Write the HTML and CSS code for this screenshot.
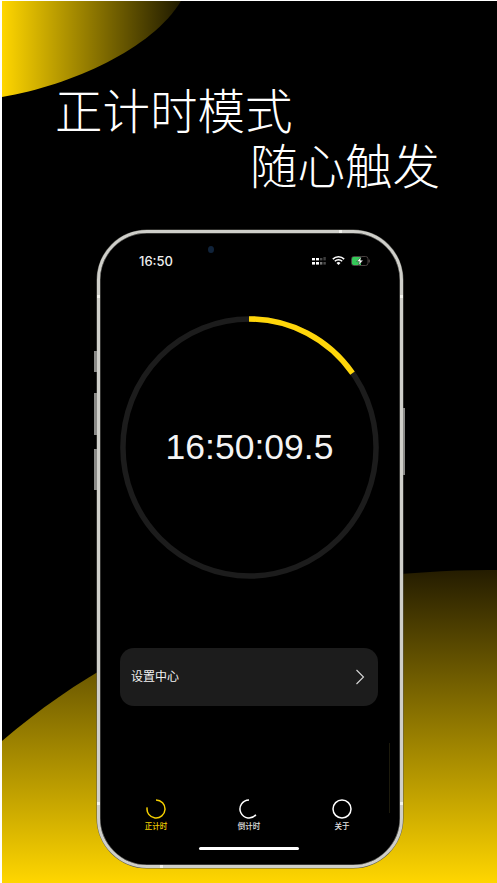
FILE: index.html
```html
<!DOCTYPE html>
<html lang="zh">
<head>
<meta charset="utf-8">
<title>正计时模式</title>
<link rel="stylesheet" href="styles.css">
</head>
<body>
<main class="poster">
  <svg class="backdrop" viewBox="0 0 495 882" aria-hidden="true">
    <defs>
      <linearGradient id="topFade" x1="0" y1="0" x2="1" y2="0">
        <stop offset="0" stop-color="#ffd600"/>
        <stop offset="1" stop-color="#ffd600" stop-opacity="0.12"/>
      </linearGradient>
      <linearGradient id="bottomFade" x1="0" y1="0" x2="0" y2="1">
        <stop offset="0" stop-color="#241c00"/>
        <stop offset="1" stop-color="#ffd600"/>
      </linearGradient>
    </defs>
    <path d="M0 0H179C150 48 70 84 0 96Z" fill="url(#topFade)"/>
    <path d="M0 740C128 629 298 567 495 569V882H0Z" fill="url(#bottomFade)"/>
  </svg>

  <h1 class="headline">
    <span class="line-one">正计时模式</span>
    <span class="line-two">随心触发</span>
  </h1>

  <div class="phone">
    <i class="side-btn mute"></i>
    <i class="side-btn vol-up"></i>
    <i class="side-btn vol-down"></i>
    <i class="side-btn power"></i>
    <i class="band band-top"></i>
    <i class="band band-left"></i>
    <i class="band band-right"></i>
    <i class="band band-low-left"></i>
    <i class="band band-low-right"></i>
    <i class="band band-bottom"></i>
    <i class="camera"></i>
    <i class="edge-line"></i>

    <header class="status">
      <span class="clock">16:50</span>
      <div class="status-icons">
        <svg class="signal" viewBox="0 0 14 8" aria-hidden="true">
          <rect x="0" y="1" width="3" height="2.4" fill="#fff"/>
          <rect x="4" y="1" width="3" height="2.4" fill="#fff"/>
          <rect x="0" y="5" width="3" height="2.6" fill="#fff"/>
          <rect x="4" y="5" width="3" height="2.6" fill="#fff"/>
          <rect x="8" y="1" width="2.4" height="2.4" fill="#4a4a4a"/>
          <rect x="8" y="5" width="2.4" height="2.6" fill="#777"/>
          <rect x="11.4" y="0" width="2.4" height="3.4" fill="#3c3c3c"/>
          <rect x="11.4" y="5" width="2.4" height="2.6" fill="#4a4a4a"/>
        </svg>
        <svg class="wifi" viewBox="0 0 13 9" aria-hidden="true">
          <path d="M.8 3.1a8.2 8.2 0 0 1 11.4 0M2.8 5.2a5.3 5.3 0 0 1 7.4 0" fill="none" stroke="#fff" stroke-width="1.5"/>
          <path d="M4.5 6.9a2.8 2.8 0 0 1 4 0L6.5 9Z" fill="#fff"/>
        </svg>
        <svg class="battery" viewBox="0 0 19 10" aria-hidden="true">
          <rect x=".5" y=".5" width="16.5" height="9" rx="2.4" fill="none" stroke="#5c5250" stroke-width=".8"/>
          <path d="M2.4 1H10V9H2.4A1.4 1.4 0 0 1 1 7.6V2.4A1.4 1.4 0 0 1 2.4 1Z" fill="#35c759"/>
          <rect x="17.6" y="3.5" width="1.1" height="3" rx=".5" fill="#5c5250"/>
          <path d="M10.4 .4 5.8 5.6H8.4L7.4 9.6 12.2 4.2H9.4Z" fill="#fff" stroke="#000" stroke-width=".4"/>
        </svg>
      </div>
    </header>

    <section class="dial">
      <svg class="dial-ring" viewBox="0 0 264 264" preserveAspectRatio="none" aria-hidden="true">
        <circle cx="132" cy="132" r="129" fill="none" stroke="#1c1c1c" stroke-width="5.6"/>
        <path d="M131.5 3A129 129 0 0 1 237 57.4" fill="none" stroke="#ffd60a" stroke-width="5.6"/>
      </svg>
      <span class="time">16:50:09.5</span>
    </section>

    <a class="settings">
      <span class="settings-label">设置中心</span>
      <svg class="chevron" viewBox="0 0 10 16" aria-hidden="true">
        <path d="M1.5 1 8.5 8 1.5 15" fill="none" stroke="#d8d8d8" stroke-width="1.1"/>
      </svg>
    </a>

    <nav class="tabs">
      <div class="tab tab-active">
        <svg viewBox="0 0 20 20" aria-hidden="true"><path d="M10 1A9 9 0 1 1 1.14 8.44"/></svg>
        <span>正计时</span>
      </div>
      <div class="tab">
        <svg viewBox="0 0 20 20" aria-hidden="true"><path d="M10 1A9 9 0 1 0 16.9 15.8"/></svg>
        <span>倒计时</span>
      </div>
      <div class="tab">
        <svg viewBox="0 0 20 20" aria-hidden="true"><circle cx="10" cy="10" r="9"/></svg>
        <span>关于</span>
      </div>
    </nav>

    <i class="home-bar"></i>
  </div>
</main>
</body>
</html>
```

FILE: styles.css
```css
* { box-sizing: border-box; }

html, body {
  margin: 0;
  height: 100%;
  background: #fff;
}

body {
  padding: 1px 0 0 2px;
  overflow: hidden;
  font-family: "Noto Sans CJK SC", "Noto Sans", sans-serif;
}

.poster {
  position: relative;
  width: 495px;
  height: 882px;
  background: #000;
  overflow: hidden;
  display: flex;
  flex-direction: column;
  padding-top: 80px;
}

.backdrop {
  position: absolute;
  inset: 0;
  width: 495px;
  height: 882px;
}

.headline {
  position: relative;
  margin: 0;
  display: flex;
  flex-direction: column;
  color: #fff;
  font-size: 47.5px;
  font-weight: 300;
  line-height: 55px;
}

.line-one { margin-left: 53px; }
.line-two { margin-left: 248px; }

.phone {
  position: relative;
  margin: 39px 0 0 95px;
  width: 306px;
  height: 638px;
  background: #000;
  border: 3px solid #cfcfca;
  border-radius: 50px;
  box-shadow: 0 0 0 .5px #5a5a55, inset 0 0 0 .5px #6a6a66;
  display: flex;
  flex-direction: column;
  color: #fff;
}

.side-btn {
  position: absolute;
  width: 3px;
  background: #8a8a88;
}
.mute { left: -6px; top: 118px; height: 21px; }
.vol-up { left: -6px; top: 160px; height: 42px; }
.vol-down { left: -6px; top: 216px; height: 41px; }
.power { right: -5px; left: auto; top: 175px; height: 67px; width: 2px; }

.band {
  position: absolute;
  width: 3px;
  height: 3px;
  background: #f1f1ec;
}
.band-top { left: 239px; top: -3px; }
.band-left { left: -3px; top: 62px; }
.band-right { right: -3px; top: 62px; }
.band-low-left { left: -3px; top: 569px; }
.band-low-right { right: -3px; top: 569px; }
.band-bottom { left: 60px; bottom: -3px; }

.camera {
  position: absolute;
  left: 108px;
  top: 13px;
  width: 6px;
  height: 7px;
  border-radius: 50%;
  background: #10233a;
}

.edge-line {
  position: absolute;
  right: 10px;
  top: 510px;
  width: 1px;
  height: 70px;
  background: #1c1a0c;
}

.status {
  margin-top: 20px;
  height: 16px;
  padding: 0 30px 0 39px;
  display: flex;
  align-items: center;
  justify-content: space-between;
}

.clock {
  font-family: Inter, "Liberation Sans", sans-serif;
  font-size: 13px;
  font-weight: 500;
  color: #eee;
}

.status-icons {
  display: flex;
  align-items: center;
  gap: 6px;
}
.signal { width: 14px; height: 8px; }
.wifi { width: 13px; height: 9px; margin-top: -2px; }
.battery { width: 19px; height: 10px; }

.dial {
  position: relative;
  margin: 47px 0 0 20px;
  width: 259px;
  height: 263px;
  display: flex;
  align-items: center;
  justify-content: center;
}

.dial-ring {
  position: absolute;
  inset: 0;
  width: 100%;
  height: 100%;
}

.time {
  position: relative;
  font-family: "Liberation Sans", Arial, sans-serif;
  font-size: 35.5px;
  font-weight: 400;
  line-height: 1;
  color: #f4f4f4;
}

.settings {
  margin: 69px 22px 0 20px;
  height: 58px;
  padding: 0 13px 0 11px;
  background: #1c1c1c;
  border-radius: 14px;
  display: flex;
  align-items: center;
  justify-content: space-between;
  font-size: 12px;
  color: #f2f2f2;
}

.settings-label { margin-top: -3px; }

.chevron { width: 10px; height: 16px; }

.tabs {
  margin-top: 93px;
  padding: 0 28px 0 26px;
  display: flex;
  justify-content: space-between;
}

.tab {
  width: 60px;
  display: flex;
  flex-direction: column;
  align-items: center;
  font-size: 7.5px;
  font-weight: 500;
  line-height: 11px;
  color: #e4e4e4;
}

.tab svg {
  width: 20px;
  height: 20px;
  margin-bottom: 1px;
  fill: none;
  stroke: #fff;
  stroke-width: 1.5;
}

.tab-active { color: #f5d000; }
.tab-active svg { stroke: #f5d000; }

.home-bar {
  margin: 16px 0 0 99px;
  width: 100px;
  height: 3px;
  border-radius: 2px;
  background: #fff;
}
```
